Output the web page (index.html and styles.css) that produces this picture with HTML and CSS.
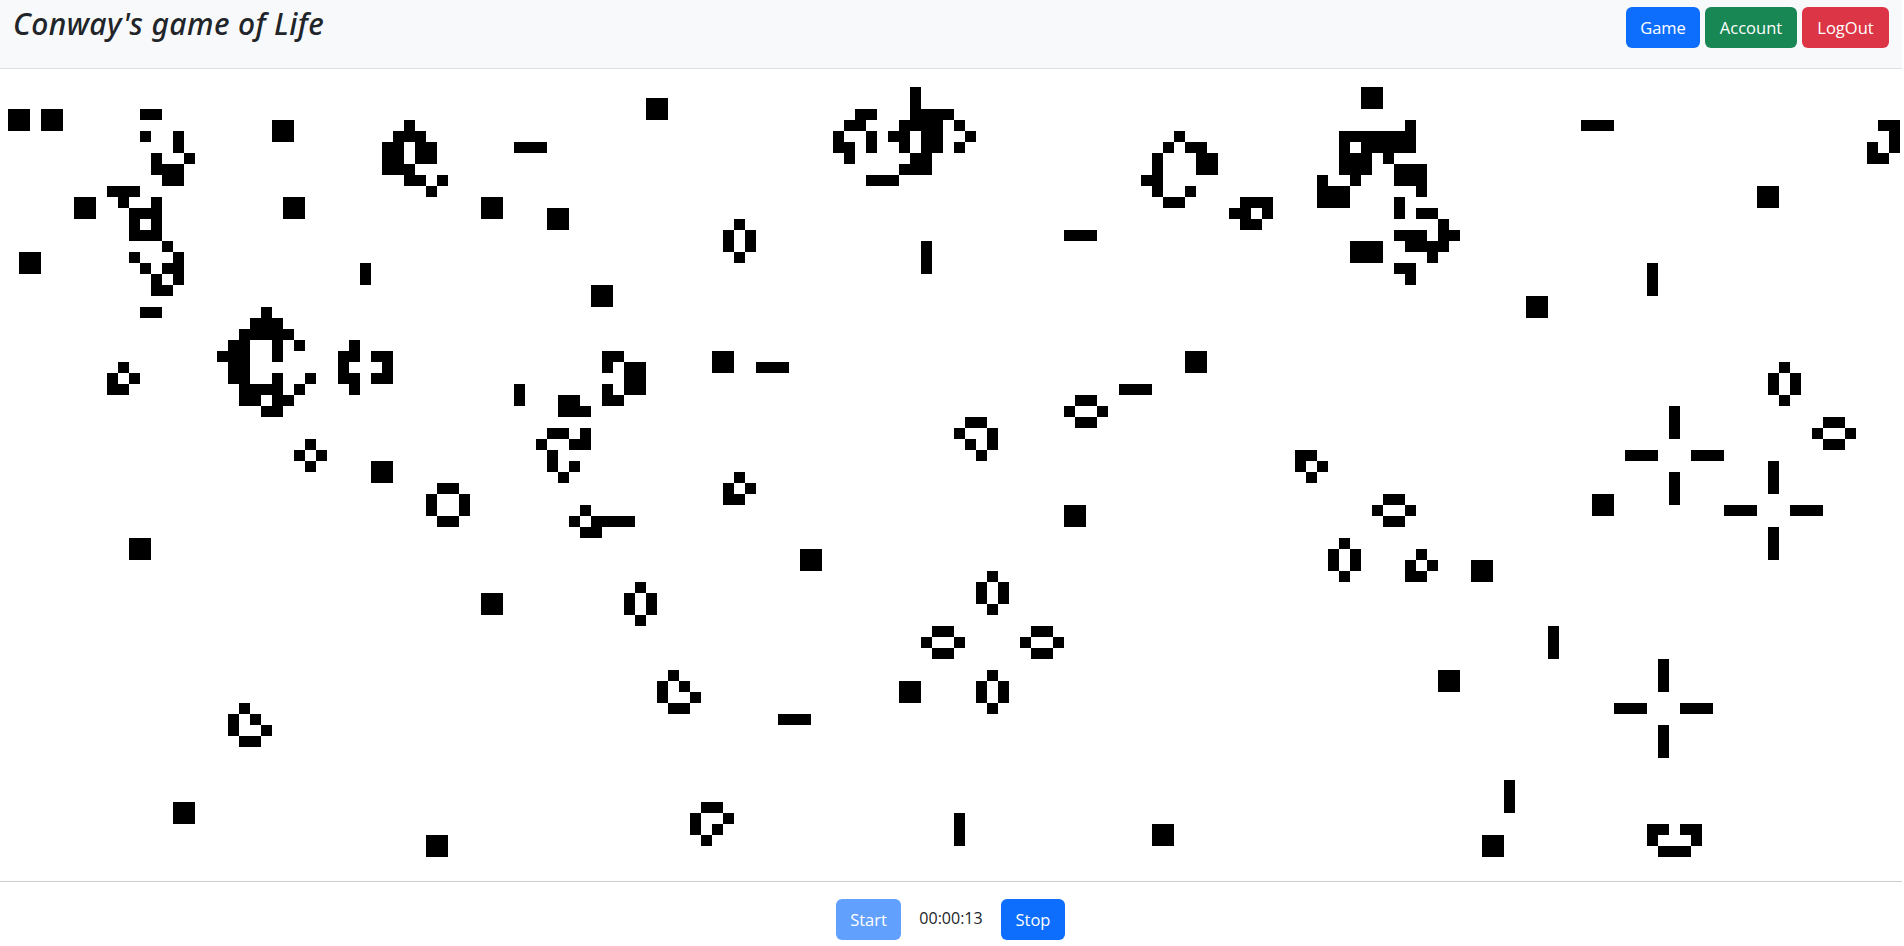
FILE: index.html
```html
<!DOCTYPE html>
<html lang="en">
<head>
<meta charset="utf-8">
<title>Conway's game of Life</title>
<link rel="stylesheet" href="styles.css">
</head>
<body>
<div class="page">
  <header class="topbar">
    <h1 class="title">Conway's game of Life</h1>
    <nav class="nav">
      <button class="btn btn-blue nav-game">Game</button>
      <button class="btn btn-green nav-account">Account</button>
      <button class="btn btn-red nav-logout">LogOut</button>
    </nav>
  </header>
  <main class="board">
    <canvas id="life" class="life" width="1902" height="812"></canvas>
  </main>
  <footer class="controls">
    <button class="btn btn-blue btn-disabled ctl-start">Start</button>
    <span class="timer">00:00:13</span>
    <button class="btn btn-blue ctl-stop">Stop</button>
  </footer>
</div>
<script src="script.js"></script>
</body>
</html>
```
FILE: styles.css
```css
* { box-sizing: border-box; }
html, body { margin: 0; padding: 0; height: 100%; overflow: hidden; background: #fff; }
body { font-family: "Open Sans", "Noto Sans", sans-serif; color: #212529; }
.page { width: 1902px; height: 946px; display: flex; flex-direction: column; }
.topbar {
  height: 69px;
  flex: none;
  display: flex;
  justify-content: space-between;
  align-items: flex-start;
  padding: 7px 13px 0;
  background: #f8f9fa;
  border-bottom: 1px solid #dee2e6;
}
.title { margin: -1px 0 0; font-family: "Noto Sans", sans-serif; font-size: 30px; line-height: 36px; font-weight: 500; font-style: italic; letter-spacing: .4px; color: #212529; }
.nav { display: flex; gap: 5px; }
.btn {
  height: 41px;
  padding: 0;
  border: 0;
  border-radius: 6px;
  color: #fff;
  font-family: inherit;
  font-size: 16.5px;
  line-height: 24px;
}
.btn-blue { background: #0d6efd; }
.btn-green { background: #198754; }
.btn-red { background: #dc3545; }
.btn-disabled { opacity: .65; }
.nav-game { width: 74px; }
.nav-account { width: 92px; }
.nav-logout { width: 87px; }
.board { height: 812px; flex: none; }
.life { display: block; }
.controls {
  flex: 1;
  display: flex;
  justify-content: center;
  align-items: flex-start;
  padding: 17px 1px 0 0;
  border-top: 1px solid #ccc;
}
.ctl-start { width: 65px; }
.ctl-stop { width: 64px; }
.timer { width: 100px; text-align: center; font-size: 16px; line-height: 24px; padding-top: 7px; }
```
FILE: script.js
```js
// Blocks, horizontal and vertical blinkers, then free runs [row, col, width].
var blocks = [[0,3],[3,3],[24,4],[6,11],[25,11],[43,11],[49,12],[53,19],[1,16],[33,35],[11,42],[43,47],[15,66],[38,69],[58,2],[81,55],[104,68],[64,25],[107,25],[96,39],[72,43],[123,1],[159,10],[138,20],[144,38],[133,44],[130,54],[134,69]];
var hbars = [[46,6],[96,14],[143,4],[68,26],[101,28],[147,34],[153,34],[156,39],[162,39],[146,57],[152,57],[70,58]];
var vbars = [[83,15],[149,17],[151,30],[151,36],[160,35],[160,41],[150,53],[150,59],[140,50],[136,64],[86,67]];
var vshort = [[32,17],[46,28]];
var runs = [
  [3,12,2],[5,12,1],[5,15,1],[6,15,1],[7,13,1],[7,16,1],[8,13,3],[9,14,2],[10,9,3],[11,10,1],[11,13,1],[12,11,3],[13,11,1],[13,13,1],[14,11,3],[15,14,1],[16,11,1],[16,15,1],[17,12,1],[17,14,2],[18,13,1],[18,15,1],[19,13,2],[21,12,2],
  [4,36,1],[5,35,3],[6,34,2],[6,37,2],[7,34,2],[7,37,2],[8,34,3],[9,36,2],[9,39,1],[10,38,1],
  [21,23,1],[22,22,3],[23,21,5],[24,20,2],[24,24,1],[24,26,1],[25,19,3],[25,24,1],[26,20,2],[27,20,2],[27,24,1],[27,27,1],[28,21,4],[28,26,1],[29,21,2],[29,24,2],[30,23,2],
  [26,10,1],[27,9,1],[27,11,1],[28,9,2],
  [24,31,1],[25,30,2],[25,33,2],[26,30,1],[26,34,1],[27,30,2],[27,33,2],[28,31,1],
  [33,27,1],[34,26,1],[34,28,1],[35,27,1],
  [37,39,2],[38,38,1],[38,41,1],[39,38,1],[39,41,1],[40,39,2],
  [25,54,2],[26,54,1],[26,56,2],[27,56,2],[28,54,1],[28,56,2],[29,54,2],
  [29,50,2],[30,50,3],
  [32,49,2],[32,52,1],[33,48,1],[33,51,2],[34,49,1],[35,49,1],[35,51,1],[36,50,1],
  [39,52,1],[40,51,1],[40,53,4],[41,52,2],
  [46,57,1],[47,56,1],[47,58,1],[48,56,1],[48,58,1],[49,57,1],
  [45,89,1],[46,88,1],[46,90,1],[47,88,1],[47,90,1],[48,89,1],
  [50,84,2],[51,83,1],[51,86,1],[52,84,2],
  [50,93,2],[51,92,1],[51,95,1],[52,93,2],
  [54,89,1],[55,88,1],[55,90,1],[56,88,1],[56,90,1],[57,89,1],
  [54,60,1],[55,59,1],[55,61,1],[56,59,1],[56,62,1],[57,60,2],
  [57,21,1],[58,20,1],[58,22,1],[59,20,1],[59,23,1],[60,21,2],
  [66,63,2],[67,62,1],[67,65,1],[68,62,1],[68,64,1],[69,63,1],
  [1,82,1],[2,82,1],[3,77,2],[3,82,4],[4,76,2],[4,81,4],[4,86,1],[5,75,1],[5,78,1],[5,80,2],[5,83,2],[5,87,1],[6,75,2],[6,78,1],[6,81,1],[6,83,2],[6,86,1],[7,76,1],[7,82,2],[8,81,3],[9,78,3],
  [13,66,1],[14,65,1],[14,67,1],[15,65,1],[15,67,1],[16,66,1],
  [5,106,1],[6,105,1],[6,107,2],[7,104,1],[7,108,2],[8,104,1],[8,108,2],[9,103,2],[10,104,1],[10,107,1],[11,105,2],
  [11,112,3],[12,111,2],[12,114,1],[13,112,2],
  [4,127,1],[5,121,7],[6,121,1],[6,123,5],[7,121,3],[7,125,1],[8,121,3],[8,126,3],[9,119,1],[9,122,1],[9,126,3],[10,119,3],[10,128,1],[11,119,3],[11,126,1],[12,126,1],[12,128,2],[13,130,1],[14,126,3],[14,130,2],[15,127,4],[15,122,3],[16,122,3],[16,129,1],[17,126,2],[18,127,1],
  [4,170,2],[5,171,1],[6,169,1],[6,171,1],[7,169,2],
  [29,97,2],[30,96,1],[30,99,1],[31,97,2],
  [31,87,2],[32,86,1],[32,89,1],[33,87,1],[33,89,1],[34,88,1],
  [36,66,1],[37,65,1],[37,67,1],[38,65,2],
  [26,161,1],[27,160,1],[27,162,1],[28,160,1],[28,162,1],[29,161,1],
  [31,165,2],[32,164,1],[32,167,1],[33,165,2],
  [34,117,2],[35,117,1],[35,119,1],[36,118,1],
  [38,125,2],[39,124,1],[39,127,1],[40,125,2],
  [42,121,1],[43,120,1],[43,122,1],[44,120,1],[44,122,1],[45,121,1],
  [43,128,1],[44,127,1],[44,129,1],[45,127,2],
  [68,149,2],[68,152,2],[69,149,1],[69,153,1],[70,150,3]
];

var CELL = 11, OFFSET_X = 8, OFFSET_Y = 7;
var ctx = document.getElementById('life').getContext('2d');
ctx.fillStyle = '#000';
function cell(c, r, w, h) {
  ctx.fillRect(OFFSET_X + c * CELL, OFFSET_Y + r * CELL, w * CELL, h * CELL);
}
blocks.forEach(function (b) { cell(b[0], b[1], 2, 2); });
hbars.forEach(function (b) { cell(b[0], b[1], 3, 1); });
vbars.forEach(function (b) { cell(b[0], b[1], 1, 3); });
vshort.forEach(function (b) { cell(b[0], b[1], 1, 2); });
runs.forEach(function (b) { cell(b[1], b[0], b[2], 1); });
```
